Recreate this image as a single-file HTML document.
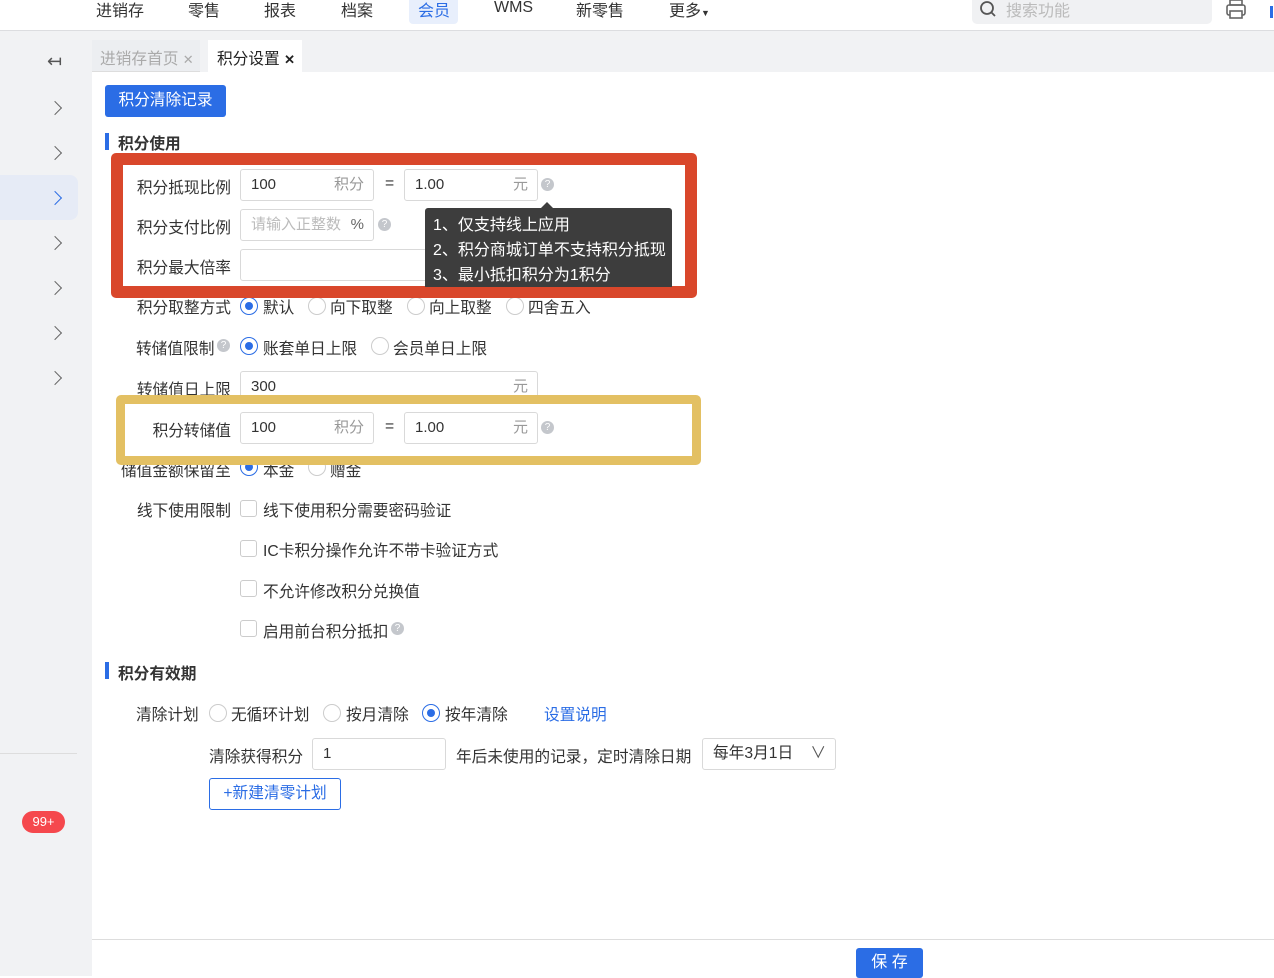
<!DOCTYPE html>
<html><head><meta charset="utf-8"><style>
*{box-sizing:border-box;margin:0;padding:0}
body{width:1274px;height:976px;overflow:hidden;position:relative;background:#fff;font-family:"Liberation Sans","Noto Sans CJK SC",sans-serif;font-size:15.7px;color:#333}
.a{position:absolute;white-space:nowrap}
.nav{left:0;top:0;width:1274px;height:31px;background:#fff;border-bottom:1px solid #dcdde0}
.side{left:0;top:31px;width:92px;height:945px;background:#f1f2f4}
.tabs{left:92px;top:31px;width:1182px;height:41px;background:#f1f2f4}
.chev{left:50px;width:10px;height:10px;border-right:1.6px solid #666;border-top:1.6px solid #666;transform:rotate(45deg)}
.inp{position:absolute;height:32px;border:1px solid #d9d9d9;border-radius:3px;background:#fff;font-size:15px;line-height:30px;padding-left:10px}
.inp .u{position:absolute;right:9px;top:0;color:#999}
.lbl{position:absolute;right:1043px;text-align:right;white-space:nowrap}
.q{position:absolute;width:13px;height:13px;border-radius:50%;background:#c4c7cc;color:#fff;font-size:10px;line-height:13px;text-align:center}
.r{position:absolute;width:18px;height:18px;border-radius:50%;border:1px solid #ccc;background:#fff}
.r.on{border:1.5px solid #2b6de5}
.r.on::after{content:"";position:absolute;left:3.5px;top:3.5px;width:8px;height:8px;border-radius:50%;background:#2b6de5}
.cb{position:absolute;width:17px;height:17px;border:1px solid #ccc;border-radius:3px;background:#fff}
.t{position:absolute;white-space:nowrap}
</style></head><body>
<div class="a nav"></div>
<div class="t" style="left:96px;top:-3px;font-size:16px">进销存</div>
<div class="t" style="left:188px;top:-3px;font-size:16px">零售</div>
<div class="t" style="left:264px;top:-3px;font-size:16px">报表</div>
<div class="t" style="left:341px;top:-3px;font-size:16px">档案</div>
<div class="a" style="left:409px;top:0;width:49px;height:24px;background:#e8effc;border-radius:0 0 4px 4px"></div>
<div class="t" style="left:418px;top:-3px;font-size:16px;color:#2b6de5">会员</div>
<div class="t" style="left:494px;top:-1px;font-size:16px">WMS</div>
<div class="t" style="left:576px;top:-3px;font-size:16px">新零售</div>
<div class="t" style="left:669px;top:-3px;font-size:16px">更多<span style="font-size:9px">▼</span></div>
<div class="a" style="left:972px;top:0;width:240px;height:24px;background:#f0f1f3;border-radius:0 0 5px 5px"></div>
<svg class="a" style="left:979px;top:0" width="20" height="20"><circle cx="8" cy="8" r="6" fill="none" stroke="#555" stroke-width="1.8"/><line x1="12.5" y1="12.5" x2="16" y2="16" stroke="#555" stroke-width="1.8"/></svg>
<div class="t" style="left:1006px;top:-3px;font-size:16px;color:#bbb">搜索功能</div>
<svg class="a" style="left:1225px;top:0" width="24" height="20"><rect x="5" y="0" width="12" height="5" fill="none" stroke="#666" stroke-width="1.6"/><rect x="2" y="5" width="18" height="10" rx="2" fill="none" stroke="#666" stroke-width="1.6"/><rect x="5" y="11" width="12" height="7" fill="#fff" stroke="#666" stroke-width="1.6"/></svg>
<div class="a" style="left:1270px;top:6px;width:3px;height:12px;background:#2b6de5"></div>

<div class="a side"></div>
<div class="a tabs"></div>
<div class="a" style="left:92px;top:40px;width:108px;height:32px;background:#eceef1;border-bottom:1px solid #ddd"></div>
<div class="t" style="left:100px;top:46px;color:#aaa">进销存首页 <span style="font-size:13px">✕</span></div>
<div class="a" style="left:208px;top:40px;width:94px;height:32px;background:#fff"></div>
<div class="t" style="left:217px;top:46px;color:#222">积分设置 <b style="font-size:13px">✕</b></div>
<div class="t" style="left:47px;top:51px;font-size:18px;color:#555">↤</div>
<div class="a" style="left:0;top:175px;width:78px;height:45px;background:#e6ebf6;border-radius:0 8px 8px 0"></div>
<div class="a chev" style="top:103px"></div>
<div class="a chev" style="top:148px"></div>
<div class="a chev" style="top:193px;border-color:#2b6de5"></div>
<div class="a chev" style="top:238px"></div>
<div class="a chev" style="top:283px"></div>
<div class="a chev" style="top:328px"></div>
<div class="a chev" style="top:373px"></div>
<div class="a" style="left:0;top:753px;width:77px;height:1px;background:#ddd"></div>
<div class="a" style="left:22px;top:811px;width:43px;height:22px;background:#f5484d;border-radius:11px;color:#fff;font-size:13px;text-align:center;line-height:22px">99+</div>

<div class="a" style="left:105px;top:85px;width:121px;height:32px;background:#2b6de5;border-radius:3px;color:#fff;font-size:15.7px;line-height:32px;text-align:center">积分清除记录</div>
<div class="a" style="left:105px;top:133px;width:4px;height:17px;background:#2b6de5"></div>
<div class="t" style="left:118px;top:131px;font-weight:bold">积分使用</div>

<div class="lbl" style="top:175px">积分抵现比例</div>
<div class="inp" style="left:240px;top:169px;width:134px">100<span class="u">积分</span></div>
<div class="t" style="left:385px;top:175px">=</div>
<div class="inp" style="left:404px;top:169px;width:134px">1.00<span class="u">元</span></div>
<div class="q" style="left:541px;top:178px">?</div>

<div class="lbl" style="top:215px">积分支付比例</div>
<div class="inp" style="left:240px;top:209px;width:134px;color:#bbb">请输入正整数<span class="u" style="color:#666">%</span></div>
<div class="q" style="left:378px;top:218px">?</div>

<div class="lbl" style="top:255px">积分最大倍率</div>
<div class="inp" style="left:240px;top:249px;width:298px"></div>

<div class="lbl" style="top:295px">积分取整方式</div>
<div class="r on" style="left:240px;top:297px"></div><div class="t" style="left:263px;top:295px">默认</div>
<div class="r" style="left:308px;top:297px"></div><div class="t" style="left:330px;top:295px">向下取整</div>
<div class="r" style="left:407px;top:297px"></div><div class="t" style="left:429px;top:295px">向上取整</div>
<div class="r" style="left:506px;top:297px"></div><div class="t" style="left:528px;top:295px">四舍五入</div>

<div class="t" style="left:136px;top:336px">转储值限制</div><div class="q" style="left:217px;top:339px">?</div>
<div class="r on" style="left:240px;top:337px"></div><div class="t" style="left:263px;top:336px">账套单日上限</div>
<div class="r" style="left:371px;top:337px"></div><div class="t" style="left:393px;top:336px">会员单日上限</div>

<div class="lbl" style="top:377px">转储值日上限</div>
<div class="inp" style="left:240px;top:371px;width:298px">300<span class="u">元</span></div>

<div class="t" style="left:121px;top:458px">储值金额保留至</div>
<div class="r on" style="left:240px;top:458px"></div><div class="t" style="left:263px;top:458px">本金</div>
<div class="r" style="left:308px;top:458px"></div><div class="t" style="left:330px;top:458px">赠金</div>

<div class="a" style="left:116px;top:395px;width:585px;height:70px;border:9px solid #e3c063;border-radius:5px;background:#fff"></div>
<div class="lbl" style="top:418px">积分转储值</div>
<div class="inp" style="left:240px;top:412px;width:134px">100<span class="u">积分</span></div>
<div class="t" style="left:385px;top:418px">=</div>
<div class="inp" style="left:404px;top:412px;width:134px">1.00<span class="u">元</span></div>
<div class="q" style="left:541px;top:421px">?</div>

<div class="lbl" style="top:498px">线下使用限制</div>
<div class="cb" style="left:240px;top:500px"></div><div class="t" style="left:263px;top:498px">线下使用积分需要密码验证</div>
<div class="cb" style="left:240px;top:540px"></div><div class="t" style="left:263px;top:538px">IC卡积分操作允许不带卡验证方式</div>
<div class="cb" style="left:240px;top:580px"></div><div class="t" style="left:263px;top:579px">不允许修改积分兑换值</div>
<div class="cb" style="left:240px;top:620px"></div><div class="t" style="left:263px;top:619px">启用前台积分抵扣</div><div class="q" style="left:391px;top:622px">?</div>

<div class="a" style="left:105px;top:662px;width:4px;height:17px;background:#2b6de5"></div>
<div class="t" style="left:118px;top:661px;font-weight:bold">积分有效期</div>

<div class="t" style="left:136px;top:702px">清除计划</div>
<div class="r" style="left:209px;top:704px"></div><div class="t" style="left:231px;top:702px">无循环计划</div>
<div class="r" style="left:323px;top:704px"></div><div class="t" style="left:346px;top:702px">按月清除</div>
<div class="r on" style="left:422px;top:704px"></div><div class="t" style="left:445px;top:702px">按年清除</div>
<div class="t" style="left:544px;top:702px;color:#2b6de5">设置说明</div>

<div class="t" style="left:209px;top:744px">清除获得积分</div>
<div class="inp" style="left:312px;top:738px;width:134px">1</div>
<div class="t" style="left:456px;top:744px">年后未使用的记录，定时清除日期</div>
<div class="inp" style="left:702px;top:738px;width:134px;font-size:15.7px">每年3月1日<span class="u" style="color:#555">∨</span></div>
<div class="a" style="left:209px;top:778px;width:132px;height:32px;border:1px solid #2b6de5;border-radius:3px;color:#2b6de5;text-align:center;line-height:30px">+新建清零计划</div>

<div class="a" style="left:92px;top:939px;width:1182px;height:1px;background:#ddd"></div>
<div class="a" style="left:856px;top:948px;width:67px;height:30px;background:#2b6de5;border-radius:3px;color:#fff;font-size:16px;text-align:center;line-height:30px">保 存</div>

<div class="a" style="left:111px;top:153px;width:586px;height:145px;border:12px solid #d9472b;border-radius:5px"></div>
<div class="a" style="left:425px;top:208px;width:247px;height:79px;background:#3d3d3d;border-radius:3px 3px 0 0;color:#fff;font-size:16px;line-height:25px;padding:5px 0 0 8px">1、仅支持线上应用<br>2、积分商城订单不支持积分抵现<br>3、最小抵扣积分为1积分</div>
<div class="a" style="left:541px;top:202px;width:0;height:0;border-left:6px solid transparent;border-right:6px solid transparent;border-bottom:6px solid #3d3d3d"></div>
</body></html>
